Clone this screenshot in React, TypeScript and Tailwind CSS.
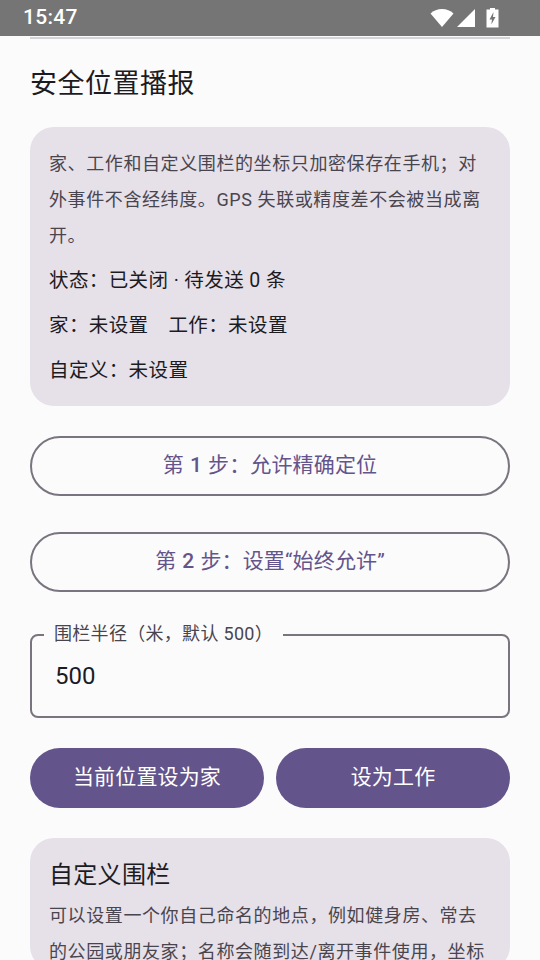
import { ReactNode } from 'react';

const font = 'font-["Roboto","Noto_Sans_CJK_SC",sans-serif]';

function StatusBar() {
  return (
    <div className="flex h-9 shrink-0 items-center justify-between bg-[#757575] pl-[23px] pr-[40px] text-white">
      <span className="text-[21px] font-medium tracking-[0.3px]">15:47</span>
      <div className="flex items-center">
        <svg width="24" height="20" viewBox="0 0 24 20" fill="white">
          <path d="M0.500 5.500C3.500 2.500 7.500 1 12 1s8.500 1.500 11.500 4.500L12 19z" />
        </svg>
        <svg className="ml-[2px]" width="20" height="20" viewBox="0 0 20 20" fill="white">
          <path d="M19 1v18H1z" />
        </svg>
        <svg className="ml-[9px]" width="15" height="20" viewBox="0 0 15 20" fill="white">
          <path
            fillRule="evenodd"
            d="M5 0h5v1.500h3.500V19.500h-12V1.500H5zM8.500 4 4.500 11.500h2.500L6.300 16.500l4.200-7.500H8z"
          />
        </svg>
      </div>
    </div>
  );
}

function OutlineButton({ children }: { children: ReactNode }) {
  return (
    <button className="flex h-[60px] w-full items-center justify-center rounded-full border-2 border-[#79747e] text-[21px] tracking-[0.15px] text-[#63548c]">
      {children}
    </button>
  );
}

function FilledButton({ children }: { children: ReactNode }) {
  return (
    <button className="flex h-[60px] flex-1 items-center justify-center rounded-full bg-[#63548c] text-[21px] tracking-[0.15px] text-white">
      {children}
    </button>
  );
}

export default function App() {
  return (
    <div className={`flex h-[960px] w-[540px] flex-col overflow-hidden bg-[#fcfbfc] ${font}`}>
      <StatusBar />
      <div className="flex flex-col px-[30px]">
        <div className="mt-px h-[2px] bg-[#d6d2da]" />
        <h1 className="mt-[27px] text-[27px] leading-[36px] font-normal tracking-[0.5px] text-[#1c1b1f]">安全位置播报</h1>

        <div className="mt-[25px] flex flex-col rounded-[24px] bg-[#e6e0e8] px-[19px] pt-[19px] pb-[17px] text-[#1c1b1f]">
          <p className="text-[18px] leading-[36px] tracking-[0.6px] text-[#49454f]">
            家、工作和自定义围栏的坐标只加密保存在手机；对外事件不含经纬度。GPS 失联或精度差不会被当成离开。
          </p>
          <p className="mt-[9px] text-[19.500px] leading-[36px] tracking-[0.4px]">状态：已关闭 · 待发送 0 条</p>
          <p className="mt-[9px] text-[19.500px] leading-[36px] tracking-[0.4px]">家：未设置　工作：未设置</p>
          <p className="mt-[9px] text-[19.500px] leading-[36px] tracking-[0.4px]">自定义：未设置</p>
        </div>

        <div className="mt-[30px] flex flex-col gap-9">
          <OutlineButton>
            第 <span className="mx-[6px] font-medium">1</span> 步：允许精确定位
          </OutlineButton>
          <OutlineButton>
            第 <span className="mx-[6px] font-medium">2</span> 步：设置“始终允许”
          </OutlineButton>
        </div>

        <div className="relative mt-[42px] flex h-[84px] items-center rounded-[8px] border-2 border-[#79747e] px-[23px]">
          <span className="absolute -top-[13px] left-[12px] bg-[#fcfbfc] px-[10px] text-[18px] leading-[22px] tracking-[0.3px] text-[#49454f]">
            围栏半径（米，默认 500）
          </span>
          <span className="text-[24px] text-[#1c1b1f]">500</span>
        </div>

        <div className="mt-[30px] flex gap-3">
          <FilledButton>当前位置设为家</FilledButton>
          <FilledButton>设为工作</FilledButton>
        </div>

        <div className="mt-[30px] rounded-[24px] bg-[#e6e0e8] px-[19px] pt-[19px]">
          <h2 className="text-[24px] leading-[36px] font-normal tracking-[0.3px] text-[#1c1b1f]">自定义围栏</h2>
          <p className="mt-[5px] text-[18px] leading-[36px] tracking-[0.6px] text-[#49454f]">
            可以设置一个你自己命名的地点，例如健身房、常去的公园或朋友家；名称会随到达/离开事件使用，坐标
          </p>
        </div>
      </div>
    </div>
  );
}
